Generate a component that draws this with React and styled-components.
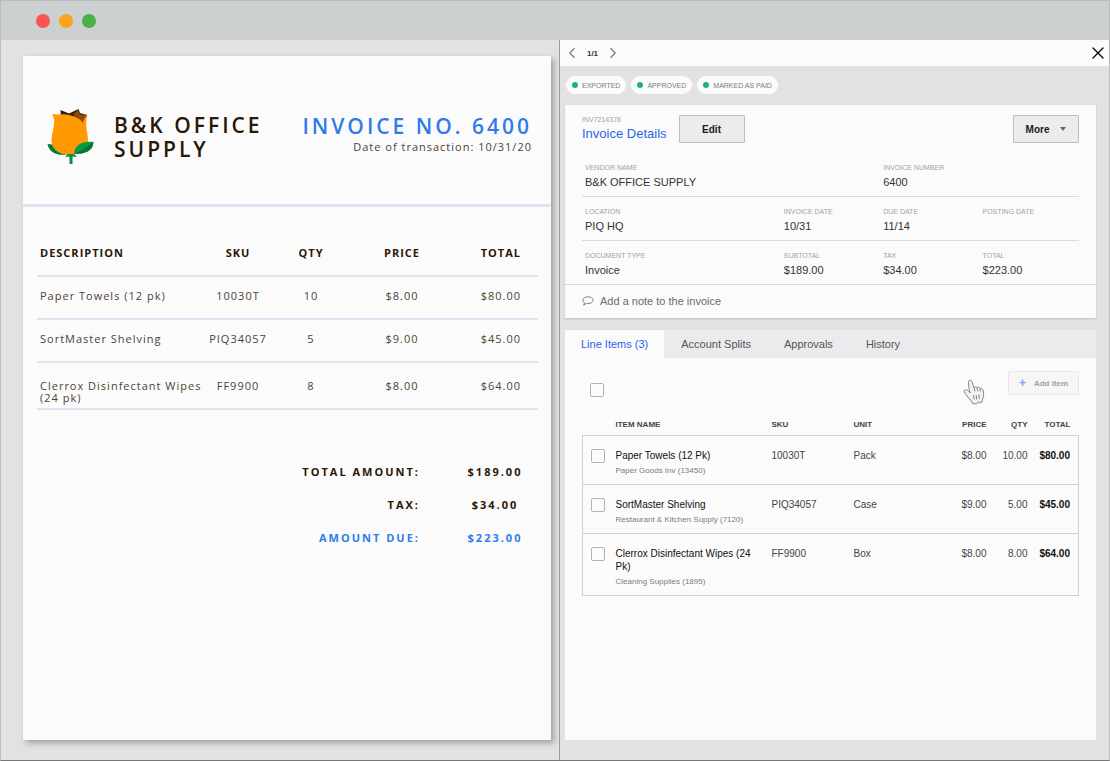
import styled, { createGlobalStyle } from "styled-components";
import { ChevronLeft, ChevronRight, X } from "lucide-react";

const invoiceLines = [
  { name: "Paper Towels (12 pk)", sku: "10030T", qty: "10", price: "$8.00", total: "$80.00" },
  { name: "SortMaster Shelving", sku: "PIQ34057", qty: "5", price: "$9.00", total: "$45.00" },
  {
    name: "Clerrox Disinfectant Wipes (24 pk)",
    sku: "FF9900",
    qty: "8",
    price: "$8.00",
    total: "$64.00",
    wrapped: true,
  },
];

const lineItems = [
  {
    name: "Paper Towels (12 Pk)",
    account: "Paper Goods Inv (13450)",
    sku: "10030T",
    unit: "Pack",
    price: "$8.00",
    qty: "10.00",
    total: "$80.00",
  },
  {
    name: "SortMaster Shelving",
    account: "Restaurant & Kitchen Supply (7120)",
    sku: "PIQ34057",
    unit: "Case",
    price: "$9.00",
    qty: "5.00",
    total: "$45.00",
  },
  {
    name: "Clerrox Disinfectant Wipes (24 Pk)",
    account: "Cleaning Supplies (1895)",
    sku: "FF9900",
    unit: "Box",
    price: "$8.00",
    qty: "8.00",
    total: "$64.00",
  },
];

const fieldRows = [
  [
    { label: "VENDOR NAME", value: "B&K OFFICE SUPPLY", span: 3 },
    { label: "INVOICE NUMBER", value: "6400", span: 2 },
  ],
  [
    { label: "LOCATION", value: "PIQ HQ", span: 2 },
    { label: "INVOICE DATE", value: "10/31", span: 1 },
    { label: "DUE DATE", value: "11/14", span: 1 },
    { label: "POSTING DATE", value: "", span: 1 },
  ],
  [
    { label: "DOCUMENT TYPE", value: "Invoice", span: 2 },
    { label: "SUBTOTAL", value: "$189.00", span: 1 },
    { label: "TAX", value: "$34.00", span: 1 },
    { label: "TOTAL", value: "$223.00", span: 1 },
  ],
];

const statuses = ["EXPORTED", "APPROVED", "MARKED AS PAID"];
const tabs = ["Line Items (3)", "Account Splits", "Approvals", "History"];

const RoseLogo = () => (
  <svg width="48" height="57" viewBox="0 0 48 57" aria-hidden="true">
    <path d="M13.5 2 L22 5.5 L31.5 1 L33 5 L40 7 L36 16 L14 9 Z" fill="#3a1c05" />
    <path d="M26 6.5 L31 2 L33 6.5 L40 7 L36 16 Z" fill="#8a4a08" />
    <path
      d="M5 6 C10 7 14 6 19 6.500 C27 7.500 34 11 36 15 C36.500 12 37.500 9 40.500 7 C37 17 41.500 25 41 34 C40 43 30 47 22 47 C11 47 4.500 43 4.500 32 C5 22 10 14 5 6 Z"
      fill="#ff9a05"
    />
    <path d="M0.500 36 L5 36.500 C7 42 12 46 20 46.500 C9 48 2 44 0.500 36 Z" fill="#0b7a34" />
    <path d="M27 46 C27 38 34 33 46.500 34 C46 43 38 46 27 46 Z" fill="#0a9a45" />
    <path d="M27 46 C34 43 41 38 46.500 34 C46 43 38 46 27 46 Z" fill="#08762f" />
    <path d="M18 49 L21 46 H27 L30 49 L25.500 48.500 V56 H22.500 V48.500 Z" fill="#0a8f40" />
  </svg>
);

const HandCursor = () => (
  <svg width="22" height="26" viewBox="0 0 22 26" aria-hidden="true">
    <path
      d="M5.500 2.500 C6 0.800 8.200 0.800 8.800 2.500 L11 9 C11.500 7.500 13.500 7.500 14 9 C14.800 7.800 16.500 8 17 9.500 C18.500 9 20 10 20.300 12 C20.800 15 21 17.500 19.500 20 L19 23 L16.500 24 L15.500 22.500 L13.500 25 L9.500 24.500 C8.500 21 5 19 3 15.500 C1.500 13.500 0.500 12 1.500 11 C3 10 5.500 11.500 7 14 L5.800 8 Z"
      fill="#f2f2f2"
      stroke="#858585"
      strokeLinejoin="round"
    />
    <path
      d="M11 9 L12 12.500 M14 9 L15 12.500 M17 9.500 L17.500 12.500 M10.500 16 L11.200 20.500 M13.200 16 L13.700 20.500 M16 15.500 L16.200 20"
      fill="none"
      stroke="#858585"
    />
  </svg>
);

const NoteIcon = () => (
  <svg width="12" height="10" viewBox="0 0 12 10" aria-hidden="true">
    <path
      d="M6 0.800 C9 0.800 11 2.200 11 4.200 C11 6.200 9 7.600 6 7.600 L4.300 7.400 L1.700 9.200 L2.400 6.700 C1.300 6 1 5.200 1 4.200 C1 2.200 3 0.800 6 0.800 Z"
      fill="none"
      stroke="#777"
      strokeWidth="0.9"
      strokeLinejoin="round"
    />
  </svg>
);

const InvoicePaper = () => (
  <Paper>
    <PaperHeader>
      <RoseLogo />
      <Brand>
        B&amp;K OFFICE
        <br />
        SUPPLY
      </Brand>
      <InvoiceHeading>
        <InvoiceNumber>INVOICE NO. 6400</InvoiceNumber>
        <TransactionDate>Date of transaction: 10/31/20</TransactionDate>
      </InvoiceHeading>
    </PaperHeader>
    <PaperBody>
      <PaperTable>
        <colgroup>
          <col />
          <col width="66" />
          <col width="80" />
          <col width="102" />
          <col width="85" />
        </colgroup>
        <thead>
          <tr>
            <th>DESCRIPTION</th>
            <th>SKU</th>
            <th>QTY</th>
            <th>PRICE</th>
            <th>TOTAL</th>
          </tr>
        </thead>
        <tbody>
          {invoiceLines.map((line) => (
            <PaperRow key={line.sku} $wrapped={line.wrapped}>
              <td>{line.name}</td>
              <td>{line.sku}</td>
              <td>{line.qty}</td>
              <td>{line.price}</td>
              <td>{line.total}</td>
            </PaperRow>
          ))}
        </tbody>
      </PaperTable>
      <Totals>
        <TotalRow>
          <dt>TOTAL AMOUNT:</dt>
          <dd>$189.00</dd>
        </TotalRow>
        <TotalRow>
          <dt>TAX:</dt>
          <dd>$34.00</dd>
        </TotalRow>
        <TotalRow $due>
          <dt>AMOUNT DUE:</dt>
          <dd>$223.00</dd>
        </TotalRow>
      </Totals>
    </PaperBody>
  </Paper>
);

const DetailsCard = () => (
  <Card>
    <CardHeader>
      <div>
        <InvoiceId>INV7214378</InvoiceId>
        <CardTitle>Invoice Details</CardTitle>
      </div>
      <Button>Edit</Button>
      <MoreButton aria-haspopup="menu">
        More
        <Caret />
      </MoreButton>
    </CardHeader>
    <Fields>
      {fieldRows.map((row) => (
        <FieldRow key={row[0].label}>
          {row.map((field) => (
            <Field key={field.label} $span={field.span}>
              <dt>{field.label}</dt>
              <dd>{field.value}</dd>
            </Field>
          ))}
        </FieldRow>
      ))}
    </Fields>
    <NoteButton>
      <NoteIcon />
      Add a note to the invoice
    </NoteButton>
  </Card>
);

const LineItemsPanel = () => (
  <Panel>
    <TabList role="tablist">
      {tabs.map((tab, i) => (
        <Tab key={tab} role="tab" aria-selected={i === 0} $active={i === 0}>
          {tab}
        </Tab>
      ))}
    </TabList>
    <PanelBody>
      <Toolbar>
        <Checkbox type="checkbox" aria-label="Select all items" />
        <AddButton>
          <span>+</span>
          Add item
        </AddButton>
        <Pointer>
          <HandCursor />
        </Pointer>
      </Toolbar>
      <ItemsTable>
        <colgroup>
          <col width="33" />
          <col width="156" />
          <col width="82" />
          <col />
          <col width="50" />
          <col width="41" />
          <col width="51" />
        </colgroup>
        <thead>
          <tr>
            <th />
            <th>ITEM NAME</th>
            <th>SKU</th>
            <th>UNIT</th>
            <NumHead>PRICE</NumHead>
            <NumHead>QTY</NumHead>
            <NumHead $last>TOTAL</NumHead>
          </tr>
        </thead>
        <tbody>
          {lineItems.map((item) => (
            <tr key={item.sku}>
              <td>
                <Checkbox type="checkbox" aria-label={`Select ${item.name}`} />
              </td>
              <td>
                <ItemName>{item.name}</ItemName>
                <ItemAccount>{item.account}</ItemAccount>
              </td>
              <td>{item.sku}</td>
              <td>{item.unit}</td>
              <NumCell>{item.price}</NumCell>
              <NumCell>{item.qty}</NumCell>
              <NumCell $last>{item.total}</NumCell>
            </tr>
          ))}
        </tbody>
      </ItemsTable>
    </PanelBody>
  </Panel>
);

const App = () => {
  return (
    <>
      <GlobalStyle />
      <Window>
        <TitleBar>
          <Light $color="#f9564f" />
          <Light $color="#fba31b" />
          <Light $color="#4cb04a" />
        </TitleBar>
        <Panes>
          <PaperPane>
            <InvoicePaper />
          </PaperPane>
          <DetailsPane>
            <PagerBar>
              <IconButton aria-label="Previous invoice">
                <ChevronLeft size={18} strokeWidth={1.5} />
              </IconButton>
              <PageCount>1/1</PageCount>
              <IconButton aria-label="Next invoice">
                <ChevronRight size={18} strokeWidth={1.5} />
              </IconButton>
              <CloseButton aria-label="Close">
                <X size={20} strokeWidth={1.5} />
              </CloseButton>
            </PagerBar>
            <DetailsBody>
              <Chips>
                {statuses.map((status) => (
                  <Chip key={status}>{status}</Chip>
                ))}
              </Chips>
              <DetailsCard />
              <LineItemsPanel />
            </DetailsBody>
          </DetailsPane>
        </Panes>
      </Window>
    </>
  );
};

const GlobalStyle = createGlobalStyle`
  * {
    box-sizing: border-box;
  }
  body {
    margin: 0;
    font-family: "Liberation Sans", Arial, sans-serif;
    color: #333;
  }
  button {
    font-family: inherit;
    cursor: pointer;
  }
  h1, h2, p, dl, dt, dd {
    margin: 0;
  }
`;
const Window = styled.div`
  min-height: 100vh;
  display: flex;
  flex-direction: column;
  background: #e2e2e2;
  border: 1px solid #bcbcbc;
  border-bottom-color: #777;
`;
const TitleBar = styled.header`
  height: 39px;
  display: flex;
  align-items: center;
  gap: 9px;
  padding-left: 35px;
  background: #cdd0d1;
`;
const Light = styled.span`
  width: 14px;
  height: 14px;
  border-radius: 50%;
  background: ${(props) => props.$color};
`;
const Panes = styled.div`
  flex: 1;
  display: grid;
  grid-template-columns: minmax(0, 558fr) minmax(0, 550fr);
`;
const PaperPane = styled.section`
  display: flex;
  padding: 16px 8px 20px 22px;
`;
const Paper = styled.article`
  flex: 1;
  min-width: 0;
  background: #fbfbfb;
  box-shadow: 3px 3px 6px rgba(0, 0, 0, 0.3);
  font-family: "Open Sans", sans-serif;
  color: #4b4336;
`;
const PaperHeader = styled.header`
  height: 151px;
  display: flex;
  align-items: flex-start;
  padding: 52px 19px 0 24px;
  border-bottom: 3px solid #dfe2f3;
`;
const Brand = styled.h1`
  margin: 5px 0 0 19px;
  font-size: 21px;
  font-weight: 600;
  line-height: 24px;
  letter-spacing: 3px;
  color: #2a1706;
  white-space: nowrap;
`;
const InvoiceHeading = styled.div`
  margin: 5px 0 0 auto;
  text-align: right;
  white-space: nowrap;
`;
const InvoiceNumber = styled.h2`
  font-size: 21px;
  font-weight: 600;
  line-height: 26px;
  letter-spacing: 3px;
  color: #2f7bea;
`;
const TransactionDate = styled.p`
  font-size: 11px;
  line-height: 16px;
  letter-spacing: 1px;
`;
const PaperBody = styled.div`
  padding: 25px 13px 0 14px;
`;
const PaperTable = styled.table`
  width: 100%;
  table-layout: fixed;
  border-collapse: separate;
  border-spacing: 0;
  font-size: 11px;
  line-height: 12px;
  letter-spacing: 1px;
  text-align: center;

  th {
    padding: 15px 0 16px;
    font-weight: 700;
    color: #2a1706;
    border-bottom: 2px solid #dfe2f3;
  }
  td {
    border-bottom: 2px solid #dfe2f3;
    vertical-align: top;
  }
  th:first-child,
  td:first-child {
    padding-left: 3px;
    text-align: left;
  }
  th:last-child,
  td:last-child {
    padding-right: 17px;
    text-align: right;
  }
`;
const PaperRow = styled.tr`
  td {
    padding: ${(props) => (props.$wrapped ? "17px 0 4px" : "13px 0 16px")};
  }
`;
const Totals = styled.dl`
  display: flex;
  flex-direction: column;
  gap: 17px;
  padding-top: 54px;
  font-size: 11px;
  font-weight: 700;
  line-height: 16px;
  letter-spacing: 2px;
`;
const TotalRow = styled.div`
  display: flex;
  justify-content: flex-end;
  color: ${(props) => (props.$due ? "#2f7bea" : "#2a1706")};

  dd {
    width: 86px;
    margin-left: 32px;
    text-align: center;
  }
`;

const DetailsPane = styled.section`
  display: flex;
  flex-direction: column;
  border-left: 1px solid #9c9c9c;
`;
const PagerBar = styled.nav`
  height: 26px;
  display: flex;
  align-items: center;
  padding: 0 1px 0 3px;
  background: #fbfbfb;
`;
const IconButton = styled.button`
  display: flex;
  padding: 0;
  border: 0;
  background: none;
  color: #777;
`;
const CloseButton = styled(IconButton)`
  margin-left: auto;
  color: #000;
`;
const PageCount = styled.span`
  width: 23px;
  font-size: 8px;
  font-weight: 700;
  text-align: center;
`;
const DetailsBody = styled.div`
  flex: 1;
  display: flex;
  flex-direction: column;
  padding: 10px 13px 20px 5px;
`;
const Chips = styled.div`
  display: flex;
  gap: 5px;
  margin: 0 0 11px 1px;
`;
const Chip = styled.span`
  height: 18px;
  display: flex;
  align-items: center;
  gap: 4px;
  padding: 0 6px;
  border-radius: 9px;
  background: #fbfbfb;
  font-size: 7px;
  color: #7c7c7c;

  &::before {
    content: "";
    width: 6px;
    height: 6px;
    border-radius: 50%;
    background: #1fae92;
  }
`;
const Card = styled.section`
  background: #fbfbfb;
  box-shadow: 0 1px 2px rgba(0, 0, 0, 0.15);
`;
const CardHeader = styled.header`
  display: flex;
  align-items: flex-start;
  padding: 10px 17px 0;
`;
const InvoiceId = styled.p`
  font-size: 7px;
  line-height: 9px;
  color: #a2a2a2;
`;
const CardTitle = styled.h2`
  margin-right: 12px;
  font-size: 13px;
  font-weight: 400;
  line-height: 20px;
  color: #2b66e8;
`;
const Button = styled.button`
  height: 28px;
  width: 66px;
  display: flex;
  align-items: center;
  justify-content: center;
  padding: 0;
  border: 1px solid #bdbdbd;
  border-radius: 1px;
  background: #ececed;
  font-size: 10px;
  font-weight: 700;
  color: #1a1a1a;
`;
const MoreButton = styled(Button)`
  gap: 11px;
  margin-left: auto;
`;
const Caret = styled.span`
  border: 3px solid transparent;
  border-top: 4px solid #666;
  border-bottom: 0;
`;
const Fields = styled.dl`
  padding-top: 9px;
`;
const FieldRow = styled.div`
  height: 44px;
  display: grid;
  grid-template-columns: repeat(5, 1fr);
  margin: 0 17px;
  padding-top: 10px;
  border-bottom: 1px solid #dadada;

  &:last-child {
    margin: 0;
    padding: 10px 17px 0;
  }
`;
const Field = styled.div`
  grid-column: span ${(props) => props.$span};
  padding-left: 3px;

  dt {
    font-size: 7px;
    line-height: 10px;
    color: #a2a2a2;
  }
  dd {
    font-size: 11px;
    line-height: 18px;
  }
`;
const NoteButton = styled.button`
  width: 100%;
  height: 33px;
  display: flex;
  align-items: center;
  gap: 6px;
  padding: 0 17px 2px;
  border: 0;
  background: none;
  font-size: 11px;
  color: #6c6c6c;
`;
const Panel = styled.section`
  flex: 1;
  margin-top: 12px;
  background: #fbfbfb;
`;
const TabList = styled.div`
  height: 28px;
  display: flex;
  gap: 1px;
  background: #ebebed;
`;
const Tab = styled.button`
  padding: 0 16px;
  border: 0;
  background: ${(props) => (props.$active ? "#fbfbfb" : "none")};
  font-size: 11px;
  color: ${(props) => (props.$active ? "#2b5ff0" : "#555")};
`;
const PanelBody = styled.div`
  padding: 13px 17px;
`;
const Toolbar = styled.div`
  height: 26px;
  display: flex;
  justify-content: space-between;
  align-items: flex-start;
  position: relative;
  padding-left: 8px;

  input {
    align-self: flex-end;
  }
`;
const Checkbox = styled.input`
  appearance: none;
  display: block;
  width: 14px;
  height: 14px;
  margin: 0;
  border: 1px solid #b2b2b2;
  border-radius: 2px;
  background: #fbfbfb;
`;
const AddButton = styled.button`
  height: 24px;
  width: 71px;
  display: flex;
  align-items: center;
  justify-content: center;
  gap: 8px;
  padding: 0;
  border: 1px solid #e8e8e8;
  border-radius: 2px;
  background: #f6f6f6;
  font-size: 8px;
  font-weight: 700;
  color: #a0a0a0;

  span {
    font-size: 12px;
    color: #7ea2f5;
  }
`;
const Pointer = styled.div`
  position: absolute;
  top: 8px;
  right: 94px;
  display: flex;
`;
const ItemsTable = styled.table`
  width: 100%;
  table-layout: fixed;
  border-collapse: collapse;
  font-size: 10px;
  line-height: 13px;
  color: #444;

  tbody,
  tbody tr {
    border: 1px solid #d2d2d2;
  }
  th {
    padding: 21px 0 4px;
    font-size: 8px;
    font-weight: 700;
    text-align: left;
  }
  td {
    padding: 13px 0 7px;
    vertical-align: top;
  }
  td:first-child {
    padding-left: 8px;
  }
`;
const NumHead = styled.th`
  && {
    padding-right: ${(props) => (props.$last ? "8px" : "0")};
    text-align: right;
  }
`;
const NumCell = styled.td`
  && {
    padding-right: ${(props) => (props.$last ? "8px" : "0")};
    text-align: right;
    font-weight: ${(props) => (props.$last ? 700 : 400)};
    color: ${(props) => (props.$last ? "#111" : "#444")};
  }
`;
const ItemName = styled.div`
  padding-right: 12px;
  color: #111;
`;
const ItemAccount = styled.div`
  margin-top: 3px;
  font-size: 8px;
  line-height: 12px;
  color: #7c7c7c;
`;
export default App;
